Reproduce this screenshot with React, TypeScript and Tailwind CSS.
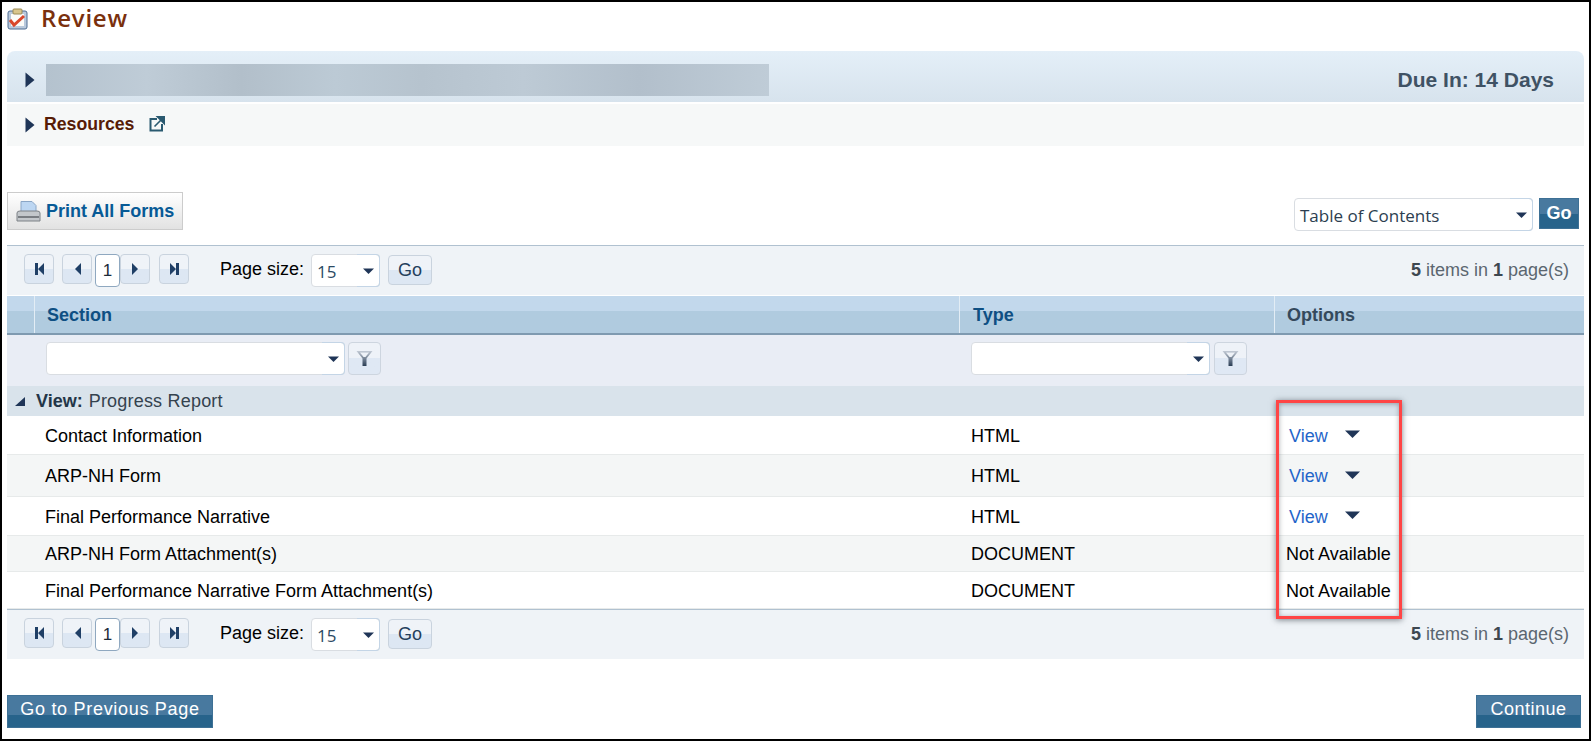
import React from 'react';

const ROWS = [
  { name: 'Contact Information', type: 'HTML', view: true, h: 'h-[39px]', bg: 'bg-white' },
  { name: 'ARP-NH Form', type: 'HTML', view: true, h: 'h-[42px]', bg: 'bg-[#f4f6f6]' },
  { name: 'Final Performance Narrative', type: 'HTML', view: true, h: 'h-[39px]', bg: 'bg-white' },
  { name: 'ARP-NH Form Attachment(s)', type: 'DOCUMENT', view: false, h: 'h-[36px]', bg: 'bg-[#f4f6f6]' },
  { name: 'Final Performance Narrative Form Attachment(s)', type: 'DOCUMENT', view: false, h: 'h-[37px]', bg: 'bg-white' },
];

const Caret = ({ className = '' }: { className?: string }) => (
  <svg width="15" height="8" viewBox="0 0 14 8" preserveAspectRatio="none" className={className}>
    <path d="M0 0.5h14L7 8z" fill="#1f3557" />
  </svg>
);

const RightArrow = () => (
  <svg width="10" height="16" viewBox="0 0 10 16" className="shrink-0">
    <path d="M0.5 0.5L9.5 8L0.5 15.5z" fill="#1f3557" />
  </svg>
);

function PagerIcon({ kind }: { kind: 'first' | 'prev' | 'next' | 'last' }) {
  const paths = {
    first: 'M0 0h3v12H0zM3 6l6-6v12z',
    prev: 'M2 6l6-6v12z',
    next: 'M1 0l6 6-6 6z',
    last: 'M0 0l6 6-6 6zM6 0h3v12H6z',
  };
  return (
    <svg width="9" height="12" viewBox="0 0 9 12">
      <path d={paths[kind]} fill="#1f3f66" />
    </svg>
  );
}

function PagerButton({ kind, width, className = '' }: { kind: 'first' | 'prev' | 'next' | 'last'; width: string; className?: string }) {
  return (
    <div className={`${width} h-[30px] rounded-[4px] border border-[#c9d3de] bg-gradient-to-b from-[#eff3f8] from-50% to-[#dde7f3] to-50% flex items-center justify-center ${className}`}>
      <PagerIcon kind={kind} />
    </div>
  );
}

function SelectBox({ width, height, value, text = 'text-[#2c3e50]' }: { width: string; height: string; value?: string; text?: string }) {
  return (
    <div className={`${width} ${height} relative flex items-center bg-white rounded-[4px] border border-[#d9dde2] font-['Open_Sans',sans-serif] ${text}`}>
      {value && <span className="pl-[5px] pt-[2px] text-[17px] leading-none">{value}</span>}
      <div className="absolute -right-px -top-px -bottom-px w-[23px] rounded-r-[4px] border border-l-0 border-[#c4d5e6] flex items-center justify-center">
        <Caret className="w-[11px] h-[6px]" />
      </div>
    </div>
  );
}

function FunnelButton() {
  return (
    <div className="w-[33px] h-[33px] rounded-[4px] border border-[#cdd5df] bg-gradient-to-b from-[#eef2f8] from-50% to-[#dfe8f4] to-50% flex items-center justify-center">
      <svg width="17" height="17" viewBox="0 0 17 17">
        <defs>
          <linearGradient id="funnelFill" x1="0" y1="0" x2="0" y2="1">
            <stop offset="0" stopColor="#c3cbd6" />
            <stop offset="1" stopColor="#2a3d55" />
          </linearGradient>
        </defs>
        <path d="M0.5 1h16L10.5 8.5V16h-4V8.5z" fill="url(#funnelFill)" />
        <path d="M4 2.5h9L9.5 7h-2z" fill="#eef2f8" />
      </svg>
    </div>
  );
}

function Pager({ bottom = false }: { bottom?: boolean }) {
  return (
    <div className={`h-[50px] bg-[#eff3f7] flex items-start justify-between border-t border-[#b0c1d0] ${bottom ? '' : 'mb-px'}`}>
      <div className="flex items-start pl-[17px] pt-2">
        <PagerButton kind="first" width="w-[30px]" />
        <PagerButton kind="prev" width="w-[30px]" className="ml-2" />
        <div className="w-[25px] h-[33px] ml-[3px] rounded-[4px] border border-[#8fa8c0] bg-white flex items-center justify-center text-[17px] text-[#1c2b3a]">1</div>
        <PagerButton kind="next" width="w-[30px]" />
        <PagerButton kind="last" width="w-[30px]" className="ml-[9px]" />
        <span className="ml-[31px] mt-[3px] text-[18px] leading-[24px] text-black">Page size:</span>
        <SelectBox width="w-[69px]" height="h-[33px]" value="15" text="text-[#2c4a63] ml-[7px]" />
        <div className="ml-2 mt-px w-[44px] h-[30px] rounded-[4px] border border-[#c9d3de] bg-gradient-to-b from-[#eff3f8] from-50% to-[#dde7f3] to-50% flex items-center justify-center text-[18px] text-[#24405c]">Go</div>
      </div>
      <div className="pr-[15px] pt-[12px] text-[18px] leading-[24px] text-[#5b6670]">
        <b className="text-[#3d4750]">5</b> items in <b className="text-[#3d4750]">1</b> page(s)
      </div>
    </div>
  );
}

export default function App() {
  return (
    <div className="relative w-[1591px] h-[741px] overflow-hidden border-2 border-black bg-white pl-[5px] pr-[5px] font-['Liberation_Sans',Arial,sans-serif]">
      <div className="h-[49px] flex items-start">
        <svg width="21" height="22" viewBox="0 0 21 22" className="mt-[6px] shrink-0">
          <rect x="1" y="3" width="19" height="18" rx="2" fill="#b9c9dc" stroke="#4f6d92" />
          <rect x="4" y="6" width="13" height="12" fill="#fbfbf8" />
          <rect x="6" y="1" width="9" height="5" rx="1" fill="#d8c58c" stroke="#9a8a55" />
          <path d="M3 12l4 5 10-9" fill="none" stroke="#d9472b" strokeWidth="3" />
        </svg>
        <h1 className="ml-[13px] text-[24px] leading-[32px] font-semibold tracking-[0.8px] text-[#7a300d] font-['Open_Sans',sans-serif]">Review</h1>
      </div>

      <div className="h-[51px] rounded-t-[8px] bg-gradient-to-b from-[#e4eff8] to-[#d7e3ed] flex items-center">
        <div className="ml-[18px] mt-[6px]"><RightArrow /></div>
        <div className="ml-[11px] mt-[7px] h-[32px] w-[723px] bg-[linear-gradient(90deg,#b4c2ce_0%,#bfccd7_14%,#b2bfca_27%,#bccad5_40%,#b6c3ce_52%,#bdcad5_66%,#b2bfcb_82%,#bfccd7_100%)]" />
        <div className="ml-auto mr-[30px] mt-[6px] text-[21px] font-bold text-[#3f5264]">Due In: 14 Days</div>
      </div>

      <div className="mt-[2px] h-[42px] pb-[2px] bg-[#f6f8f8] flex items-center">
        <div className="ml-[18px] mt-[2px]"><RightArrow /></div>
        <span className="ml-[9px] text-[17.7px] font-bold text-[#571c06]">Resources</span>
        <svg width="16" height="16" viewBox="0 0 16 16" className="ml-[15px]">
          <path d="M8 3H1.5v11.5H13V8" fill="none" stroke="#2a5a70" strokeWidth="2" />
          <path d="M5.5 10.5L13 3M8.5 0.8h6.7v6.7z" fill="#2a5a70" stroke="#2a5a70" strokeWidth="1.6" />
        </svg>
      </div>

      <div className="mt-[46px] h-[53px] flex items-start justify-between">
        <div className="w-[176px] h-[38px] border border-[#cccccc] bg-gradient-to-b from-white to-[#e2e2e2] flex items-center pl-[8px]">
          <svg width="25" height="21" viewBox="0 0 25 21" className="shrink-0">
            <path d="M5 0.5h11l4 4V13H5z" fill="#bcd6f2" stroke="#8aa6c6" />
            <path d="M1 12q0-2 3-2h17q3 0 3 2v8H1z" fill="#c3c7cb" stroke="#7d8186" />
            <rect x="2" y="15" width="21" height="2" fill="#797d82" />
          </svg>
          <span className="ml-[5px] text-[18px] font-bold text-[#075a96]">Print All Forms</span>
        </div>
        <div className="flex items-start mt-[6px] pr-[5px]">
          <SelectBox width="w-[239px]" height="h-[33px]" value="Table of Contents" />
          <div className="ml-[6px] w-[40px] h-[31px] border border-[#3d7095] bg-gradient-to-b from-[#48799f] from-50% to-[#27638b] to-50% flex items-center justify-center text-[18px] font-bold text-white">Go</div>
        </div>
      </div>

      <Pager />

      <div className="h-[39px] flex border-b-2 border-[#7f9ab0] bg-gradient-to-b from-[#c2d8ec] from-40% to-[#b0cbdf] to-40% text-[18px] font-bold">
        <div className="w-[28px] border-r border-[#e3edf5]" />
        <div className="w-[925px] pl-[12px] pt-[6px] text-[#0e4f83] border-r border-[#e3edf5]">Section</div>
        <div className="w-[315px] pl-[13px] pt-[6px] text-[#0e4f83] border-r border-[#e3edf5]">Type</div>
        <div className="flex-1 pl-[12px] pt-[6px] text-[#34495c]">Options</div>
      </div>

      <div className="h-[51px] flex items-start pt-[7px] bg-[#e9edf5]">
        <div className="w-[39px] shrink-0" />
        <SelectBox width="w-[299px]" height="h-[33px]" />
        <div className="ml-[3px]"><FunnelButton /></div>
        <div className="w-[590px] shrink-0" />
        <SelectBox width="w-[239px]" height="h-[33px]" />
        <div className="ml-1"><FunnelButton /></div>
      </div>

      <div className="h-[30px] flex items-center bg-[#d9e3eb] text-[18px] text-[#34424e]">
        <svg width="10" height="9" viewBox="0 0 10 9" className="ml-[8px]">
          <path d="M0 9L10 0v9z" fill="#1f3557" />
        </svg>
        <b className="ml-[11px] text-[#233648]">View:</b>
        <span className="ml-[6px] tracking-[0.2px]">Progress Report</span>
      </div>

      {ROWS.map((row) => (
        <div key={row.name} className={`${row.h} ${row.bg} pt-[2px] flex items-center border-b border-[#e7eaea] text-[18px] text-black`}>
          <div className="w-[965px] shrink-0 pl-[38px]">{row.name}</div>
          <div className="w-[316px] shrink-0 -ml-px">{row.type}</div>
          {row.view ? (
            <div className="flex items-center pl-[2px]">
              <a className="text-[#1f65c9]">View</a>
              <Caret className="ml-[17px] mb-1" />
            </div>
          ) : (
            <div className="-ml-[1px]">Not Available</div>
          )}
        </div>
      ))}

      <Pager bottom />

      <div className="mt-[36px] flex justify-between pr-[3px]">
        <div className="w-[206px] h-[33px] pb-[4px] border border-[#3d7095] bg-gradient-to-b from-[#48799f] from-60% to-[#27638b] to-60% flex items-center justify-center text-[18px] tracking-[0.7px] text-white">Go to Previous Page</div>
        <div className="w-[105px] h-[33px] pb-[4px] border border-[#3d7095] bg-gradient-to-b from-[#48799f] from-60% to-[#27638b] to-60% flex items-center justify-center text-[18px] tracking-[0.5px] text-white">Continue</div>
      </div>

      <div className="absolute left-[1274px] top-[398px] w-[126px] h-[219px] border-[3px] border-[#ff4545] shadow-[0_1px_6px_rgba(40,50,60,0.6),inset_0_1px_5px_rgba(40,50,60,0.4)] pointer-events-none" />
    </div>
  );
}
